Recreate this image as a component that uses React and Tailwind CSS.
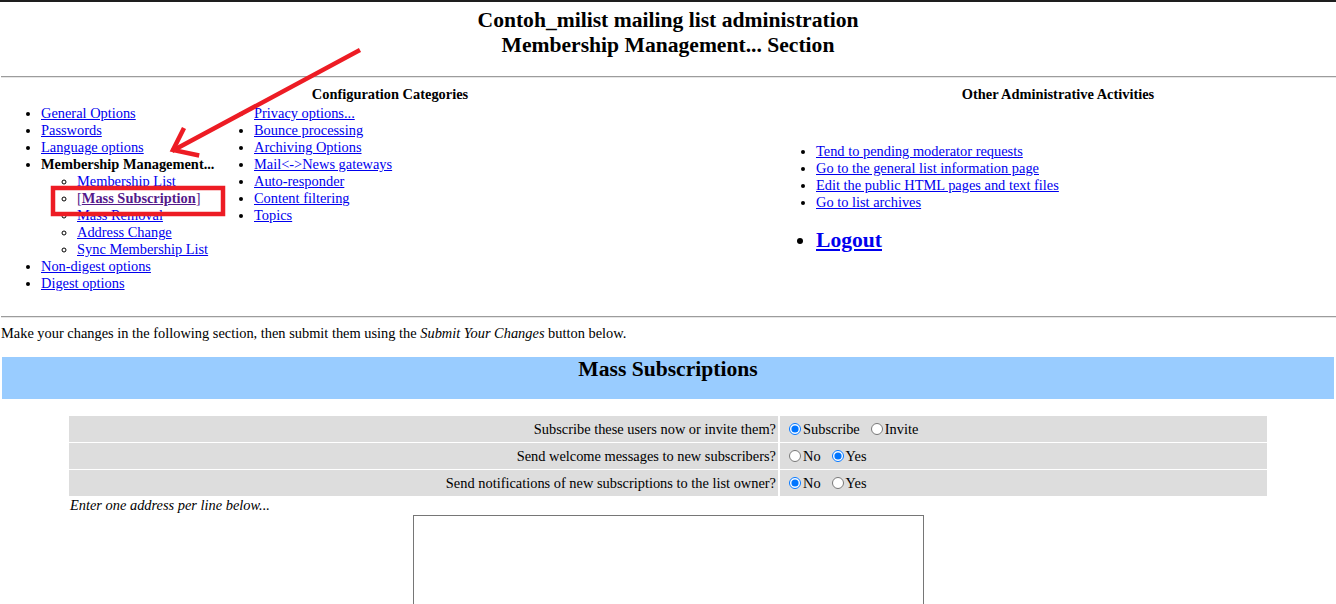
import React from 'react';

const catsA = ['General Options', 'Passwords', 'Language options'];
const members = ['Membership List', '[Mass Subscription]', 'Mass Removal', 'Address Change', 'Sync Membership List'];
const catsB = ['Non-digest options', 'Digest options'];
const catsC = ['Privacy options...', 'Bounce processing', 'Archiving Options', 'Mail<->News gateways', 'Auto-responder', 'Content filtering', 'Topics'];
const others = ['Tend to pending moderator requests', 'Go to the general list information page', 'Edit the public HTML pages and text files', 'Go to list archives'];

const Link = ({ children }) => (
    <a href="#" className='text-[#0000ee] underline'>{children}</a>
)

const Radio = ({ label, checked, name }) => (
    <label className='inline-flex items-center mr-[6px]'>
        <input type="radio" name={name} defaultChecked={checked} className='w-[12px] h-[12px] ml-[5px] mr-[2px] m-0' />
        <span>{label}</span>
    </label>
)

const rows = [
    { q: 'Subscribe these users now or invite them?', name: 'inv', opts: [['Subscribe', true], ['Invite', false]] },
    { q: 'Send welcome messages to new subscribers?', name: 'wel', opts: [['No', false], ['Yes', true]] },
    { q: 'Send notifications of new subscriptions to the list owner?', name: 'not', opts: [['No', true], ['Yes', false]] },
]

export default function App() {
    return (
        <div className="relative h-[604px] overflow-hidden border-t-2 border-[#1e1e1e] bg-white text-black font-['Liberation_Serif','Times_New_Roman',serif] text-[14.4px] leading-[17px]">
            {/* heading */}
            <div className='pt-[6px] text-center text-[21.6px] font-bold leading-[25px]'>
                <div>Contoh_milist mailing list administration</div>
                <div>Membership Management... Section</div>
            </div>
            <div className='mt-[18px] ml-[1px] h-[2px] border-t border-[#9c9c9c] border-b border-b-[#e6e6e6]'></div>

            {/* categories */}
            <div className='flex pt-[8px]'>
                <div className='w-[780px]'>
                    <div className='text-center font-bold'>Configuration Categories</div>
                    <div className='flex mt-[2px]'>
                        <ul className='w-[213px] shrink-0 whitespace-nowrap list-disc pl-[41px]'>
                            {catsA.map(c => <li key={c}><Link>{c}</Link></li>)}
                            <li>
                                <b>Membership Management...</b>
                                <ul className='list-[circle] pl-[36px]'>
                                    {members.map(m => m.startsWith('[') ? (
                                        <li key={m}>
                                            <a href="#" className='text-[#551a8b] underline'>[<b>Mass Subscription</b>]</a>
                                        </li>
                                    ) : <li key={m}><Link>{m}</Link></li>)}
                                </ul>
                            </li>
                            {catsB.map(c => <li key={c}><Link>{c}</Link></li>)}
                        </ul>
                        <ul className='list-disc pl-[41px]'>
                            {catsC.map(c => <li key={c}><Link>{c}</Link></li>)}
                        </ul>
                    </div>
                </div>
                <div className='flex-1 flex flex-col'>
                    <div className='text-center font-bold'>Other Administrative Activities</div>
                    <div className='flex-1 flex flex-col justify-center pl-[36px]'>
                        <ul className='list-disc'>
                            {others.map(o => <li key={o}><Link>{o}</Link></li>)}
                        </ul>
                        <ul className='list-disc mt-[17px]'>
                            <li className='text-[21.6px] leading-[25px] font-bold'><Link>Logout</Link></li>
                        </ul>
                    </div>
                </div>
            </div>

            <div className='mt-[24px] ml-[1px] h-[2px] border-t border-[#9c9c9c] border-b border-b-[#e6e6e6]'></div>

            <p className='mt-[7px] ml-[1px]'>Make your changes in the following section, then submit them using the <i>Submit Your Changes</i> button below.</p>

            {/* mass subscriptions */}
            <div className='mx-[2px] mt-[15px] h-[42px] bg-[#99ccff] text-center text-[21.6px] font-bold leading-[25px]'>Mass Subscriptions</div>

            <div className='ml-[69px] w-[1198px] mt-[17px]'>
                <div className='grid grid-cols-[709px_1fr] gap-x-[2px] gap-y-[1px]'>
                    {rows.map(r => (
                        <React.Fragment key={r.name}>
                            <div className='h-[26px] bg-[#dddddd] flex items-center justify-end pr-[2px]'>{r.q}</div>
                            <div className='h-[26px] bg-[#dddddd] flex items-center pl-[4px]'>
                                {r.opts.map(([l, c]) => <Radio key={l} label={l} checked={c} name={r.name} />)}
                            </div>
                        </React.Fragment>
                    ))}
                </div>
                <div className='mt-[1px] ml-[1px] italic'>Enter one address per line below...</div>
                <div className='ml-[344px] mt-[1px]'>
                    <textarea className='block w-[511px] h-[160px] border border-[#767676] resize-none'></textarea>
                </div>
            </div>

            {/* annotations */}
            <svg className='absolute left-0 top-0 pointer-events-none' width="1336" height="604">
                <g stroke="#ed1c24" strokeWidth="4.5" fill="none" strokeLinecap="square">
                    <path d="M358 49 L174 148" />
                    <path d="M183 128 L173 148 L197 153" />
                    <rect x="53" y="186" width="170" height="26" />
                </g>
            </svg>
        </div>
    );
}
